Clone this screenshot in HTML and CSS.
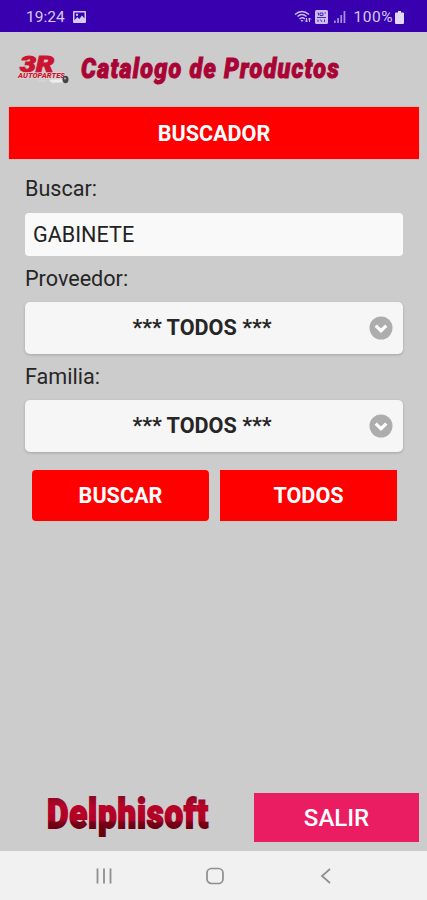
FILE: index.html
```html
<!DOCTYPE html>
<html lang="es">
  <head>
    <meta charset="UTF-8" />
    <meta name="viewport" content="width=device-width, initial-scale=1" />
    <title>Catalogo de Productos</title>
    <link rel="stylesheet" href="styles.css">
  </head>
  <body>
    <div class="status-bar">
      <span class="clock">19:24</span>
      <svg class="icon-picture" width="13" height="12" viewBox="0 0 13 12">
        <path fill="#d5cbf5" fill-rule="evenodd" d="M1 0h11a1 1 0 0 1 1 1v10a1 1 0 0 1-1 1H1a1 1 0 0 1-1-1V1a1 1 0 0 1 1-1zM1.5 1.6v7.6L4.3 6l2 2L9 4.600l2.500 3V1.600zM3 2.800h2v2H3z" />
      </svg>
      <div class="status-right">
        <svg width="18" height="15" viewBox="0 0 18 15" fill="none" stroke="#cbbff2" stroke-width="1.500">
          <path d="M1 4.500Q8 -1.500 15 4.500M3.500 6.500Q8 2.500 12.500 6.500M5.500 9Q8 6.500 11 9" />
          <path d="M6.500 10h3l-1.500 2z" fill="#cbbff2" stroke="none" />
          <path d="M12.500 8v4M11 10.500l1.500 1.500 1.500-1.500M15.500 12V8M14 9.500L15.500 8 17 9.500" stroke-width="1" />
        </svg>
        <svg width="13" height="14" viewBox="0 0 13 14">
          <rect width="13" height="14" rx="1.500" fill="#cbbff2" />
          <path d="M2.500 3h1v2.500M5 3h3v2.500H5zM9.500 3h1.500M2 7.500h9M3 9.500v2.500M5.500 9.500l1.500 2.500M9.500 9.500v2.500" fill="none" stroke="#3900b0" stroke-width=".8" />
        </svg>
        <svg width="12" height="12" viewBox="0 0 12 12" fill="#cbbff2">
          <path d="M0 9.500h1.700V12H0zM3.200 7h1.700v5H3.200zM6.400 4h1.700v8H6.400zM9.600 0h1.700v12H9.600z" opacity=".75" />
        </svg>
        <span class="battery">100%</span>
        <svg width="9" height="13" viewBox="0 0 9 13" fill="#e0d9f8">
          <path d="M3 0h3v1.500h2a1 1 0 0 1 1 1V12a1 1 0 0 1-1 1H1a1 1 0 0 1-1-1V2.500a1 1 0 0 1 1-1h2z" />
        </svg>
      </div>
    </div>

    <div class="page">
      <header class="header">
        <svg class="logo" width="54" height="32" viewBox="0 0 54 32">
          <text class="logo-3r" x="3" y="17.500" textLength="34" lengthAdjust="spacingAndGlyphs">3R</text>
          <text class="logo-sub" x="1" y="24" textLength="47" lengthAdjust="spacingAndGlyphs">AUTOPARTES</text>
          <path d="M21 27h8M32 26l12-1 3 3-12 1z" fill="#eee" stroke="#ddd" stroke-width=".8" />
          <ellipse cx="48.500" cy="25.500" rx="3" ry="3.700" fill="#444" />
          <circle cx="48" cy="24.500" r="1" fill="#bbb" />
        </svg>
        <svg class="title" width="270" height="40" viewBox="0 0 270 40">
          <text x="2" y="28" textLength="259" lengthAdjust="spacingAndGlyphs">Catalogo de Productos</text>
        </svg>
      </header>

      <div class="banner">BUSCADOR</div>

      <form class="search-form">
        <label for="buscar">Buscar:</label>
        <input type="text" id="buscar" value="GABINETE" />

        <label for="proveedor">Proveedor:</label>
        <button type="button" class="select" id="proveedor">
          <span>*** TODOS ***</span>
          <svg width="24" height="24" viewBox="0 0 24 24">
            <circle cx="12" cy="12" r="11.500" fill="#adadad" />
            <path d="M6.700 9.700l5.300 5 5.300-5" fill="none" stroke="#fff" stroke-width="3.200" />
          </svg>
        </button>

        <label for="familia">Familia:</label>
        <button type="button" class="select" id="familia">
          <span>*** TODOS ***</span>
          <svg width="24" height="24" viewBox="0 0 24 24">
            <circle cx="12" cy="12" r="11.500" fill="#adadad" />
            <path d="M6.700 9.700l5.300 5 5.300-5" fill="none" stroke="#fff" stroke-width="3.200" />
          </svg>
        </button>

        <div class="actions">
          <button type="button" class="btn btn-rounded">BUSCAR</button>
          <button type="button" class="btn">TODOS</button>
        </div>
      </form>

      <footer class="footer">
        <svg class="brand" width="170" height="56" viewBox="0 0 170 56">
          <defs>
            <linearGradient id="brandFill" gradientUnits="userSpaceOnUse" x1="0" y1="11" x2="0" y2="44">
              <stop offset="0" stop-color="#8c0824" />
              <stop offset=".3" stop-color="#b80328" />
              <stop offset=".7" stop-color="#b00024" />
              <stop offset=".78" stop-color="#780018" />
              <stop offset="1" stop-color="#68000f" />
            </linearGradient>
          </defs>
          <text x="3" y="41.500" textLength="162" lengthAdjust="spacingAndGlyphs">Delphisoft</text>
        </svg>
        <button type="button" class="btn-exit">SALIR</button>
      </footer>
    </div>

    <nav class="nav-bar">
      <svg width="18" height="18" viewBox="0 0 18 18" stroke="#8e8e8e" stroke-width="1.800">
        <path d="M2.500 1.500v15M9 1.500v15M15.500 1.500v15" />
      </svg>
      <svg width="18" height="18" viewBox="0 0 18 18" fill="none" stroke="#8e8e8e" stroke-width="1.700">
        <rect x="1" y="1.500" width="16" height="15" rx="4.500" />
      </svg>
      <svg width="18" height="18" viewBox="0 0 18 18" fill="none" stroke="#8e8e8e" stroke-width="1.700">
        <path d="M13 2L5 9l8 7" />
      </svg>
    </nav>
  </body>
</html>
```

FILE: styles.css
```css
* {
  box-sizing: border-box;
}

body {
  margin: 0;
  height: 900px;
  display: flex;
  flex-direction: column;
  background: #ccc;
  color: #262626;
  font-family: Roboto, sans-serif;
  font-size: 21.6px;
  overflow: hidden;
}

button {
  border: none;
  padding: 0;
  font-family: inherit;
  cursor: pointer;
}

.status-bar {
  height: 32px;
  flex: none;
  display: flex;
  align-items: center;
  padding: 2px 23px 0 26px;
  background: #3900b0;
  color: #d5cbf5;
  font-size: 15.5px;
}

.icon-picture {
  margin-left: 8px;
}

.status-right {
  margin-left: auto;
  display: flex;
  align-items: center;
}

.status-right svg + svg {
  margin-left: 3px;
}

.status-right svg:nth-child(3) {
  margin-left: 6px;
}

.battery {
  margin: 0 2px 0 8px;
  font-size: 15.5px;
  letter-spacing: 0.5px;
}

.page {
  flex: 1;
  display: flex;
  flex-direction: column;
}

.header {
  height: 75px;
  flex: none;
  display: flex;
  align-items: center;
  padding-left: 17px;
}

.logo {
  overflow: visible;
}

.logo text {
  font-family: Roboto, sans-serif;
  font-weight: 900;
  font-style: italic;
  fill: #cb1530;
}

.logo .logo-3r {
  font-size: 21.5px;
  stroke: #cb1530;
  stroke-width: 1px;
}

.logo .logo-sub {
  font-size: 7px;
  stroke: #e6dcdc;
  stroke-width: 1px;
  paint-order: stroke;
}

.title {
  margin-left: 8px;
  overflow: visible;
}

.title text {
  font-family: Roboto, sans-serif;
  font-size: 27px;
  font-weight: 900;
  font-style: italic;
  letter-spacing: 1.4px;
  fill: #a90435;
  stroke: #a90435;
  stroke-width: 1px;
}

.banner {
  height: 52px;
  flex: none;
  margin: 0 8px 0 9px;
  padding-top: 1px;
  display: flex;
  align-items: center;
  justify-content: center;
  background: #f00;
  color: #fff;
  font-weight: 700;
  box-shadow: 0 0 1px #f66;
}

.search-form {
  padding: 14px 24px 0 25px;
  display: flex;
  flex-direction: column;
}

.search-form label {
  height: 32px;
  line-height: 32px;
}

.search-form input {
  height: 43px;
  margin: 8px 0 7px;
  padding: 0 8px;
  border: none;
  border-radius: 4px;
  background: #f9f9f9;
  color: #222;
  font-family: inherit;
  font-size: 21.6px;
}

.select {
  height: 52px;
  margin: 7px 0;
  padding: 0 10px 0 0;
  display: flex;
  align-items: center;
  border-radius: 5px;
  background: #f6f6f6;
  box-shadow: 0 1px 3px rgba(0, 0, 0, 0.2);
  color: #262626;
  font-size: 21.6px;
  font-weight: 700;
}

.select span {
  flex: 1;
  padding: 0 0 1px 10px;
  text-align: center;
}

.actions {
  display: flex;
  gap: 11px;
  margin-top: 11px;
  padding: 0 6px 0 7px;
}

.btn {
  flex: 1;
  height: 51px;
  background: #f00;
  color: #fff;
  font-size: 21.6px;
  font-weight: 700;
}

.btn-rounded {
  border-radius: 4px;
}

.footer {
  margin-top: auto;
  display: flex;
  align-items: flex-end;
  justify-content: space-between;
  padding: 0 8px 9px 44px;
}

.brand {
  overflow: visible;
}

.brand text {
  font-family: Roboto, sans-serif;
  font-size: 41px;
  font-weight: 900;
  letter-spacing: 1px;
  fill: url(#brandFill);
  stroke: url(#brandFill);
  stroke-width: 1.8px;
}

.btn-exit {
  width: 165px;
  height: 49px;
  padding-top: 1px;
  background: #ea1d63;
  color: #fff;
  font-size: 24px;
  font-weight: 500;
}

.nav-bar {
  height: 49px;
  flex: none;
  display: flex;
  align-items: center;
  gap: 93px;
  padding-left: 95px;
  background: #f1f1f1;
}
```
